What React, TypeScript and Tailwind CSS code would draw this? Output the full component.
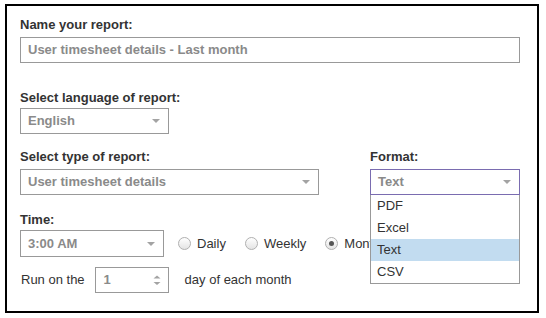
import React from "react";

function Caret() {
  return (
    <svg width="8" height="4" viewBox="0 0 8 4" className="shrink-0">
      <path d="M0 0H8L4 4Z" fill="#a3a3a3" />
    </svg>
  );
}

function Select({ value, className }: { value: string; className: string }) {
  return (
    <div
      className={
        "flex items-center justify-between border pl-[7px] pr-[8px] text-[13px] font-bold text-[#8a8a8a] bg-white " +
        className
      }
    >
      <span>{value}</span>
      <Caret />
    </div>
  );
}

function Radio({ label, checked }: { label: string; checked?: boolean }) {
  return (
    <div className="flex items-center">
      <div className="w-[13px] h-[13px] rounded-full border border-[#b0b0b0] bg-gradient-to-b from-white to-[#e4e4e4] flex items-center justify-center">
        {checked && <div className="w-[5px] h-[5px] rounded-full bg-[#555]" />}
      </div>
      <span className="ml-[6px] text-[13px] text-[#333]">{label}</span>
    </div>
  );
}

export default function App() {
  return (
    <div className="pt-[4px] pl-[5px] bg-white font-['Liberation_Sans',Arial,sans-serif]">
      <div className="w-[534px] h-[309px] border-2 border-black pt-[11px] pl-[13px] leading-[16px]">
        <div className="h-[16px] text-[13px] font-bold text-[#333]">Name your report:</div>
        <div className="mt-[4px] w-[500px] h-[26px] border border-[#999] flex items-center pl-[7px] text-[13px] font-bold text-[#8a8a8a]">
          User timesheet details - Last month
        </div>

        <div className="mt-[27px] h-[16px] text-[13px] font-bold text-[#333]">Select language of report:</div>
        <Select value="English" className="mt-[2px] w-[149px] h-[26px] border-[#999]" />

        <div className="mt-[15px] flex">
          <div className="w-[299px]">
            <div className="h-[16px] text-[13px] font-bold text-[#333]">Select type of report:</div>
            <Select value="User timesheet details" className="mt-[4px] w-[299px] h-[26px] border-[#999]" />
          </div>
          <div className="ml-[51px] w-[150px] relative z-10">
            <div className="h-[16px] text-[13px] font-bold text-[#333]">Format:</div>
            <Select value="Text" className="mt-[4px] w-[150px] h-[26px] border-[#7a6cb0]" />
            <div className="absolute left-0 top-full w-[150px] border border-t-0 border-[#999] bg-white text-[13px] text-[#333]">
              <div className="h-[22px] flex items-center pl-[6px]">PDF</div>
              <div className="h-[22px] flex items-center pl-[6px]">Excel</div>
              <div className="h-[22px] flex items-center pl-[6px] bg-[#c2dcf0]">Text</div>
              <div className="h-[22px] flex items-center pl-[6px]">CSV</div>
            </div>
          </div>
        </div>

        <div className="mt-[17px] h-[16px] text-[13px] font-bold text-[#333]">Time:</div>
        <div className="mt-[2px] flex items-center">
          <Select value="3:00 AM" className="w-[144px] h-[27px] border-[#999]" />
          <div className="ml-[14px] flex items-center gap-[19px]">
            <Radio label="Daily" />
            <Radio label="Weekly" />
            <Radio label="Monthly" checked />
          </div>
        </div>

        <div className="mt-[10px] flex items-center text-[13px] text-[#333]">
          <span className="ml-[1px]">Run on the</span>
          <div className="ml-[10px] w-[74px] h-[26px] border border-[#999] flex items-center justify-between pl-[8px] pr-[7px]">
            <span className="font-bold text-[#8a8a8a]">1</span>
            <svg width="8" height="11" viewBox="0 0 8 11">
              <path d="M0.5 3.5L4 0.5L7.5 3.5Z" fill="#a3a3a3" />
              <path d="M0.5 7L4 10L7.5 7Z" fill="#a3a3a3" />
            </svg>
          </div>
          <span className="ml-[16px]">day of each month</span>
        </div>
      </div>
    </div>
  );
}
